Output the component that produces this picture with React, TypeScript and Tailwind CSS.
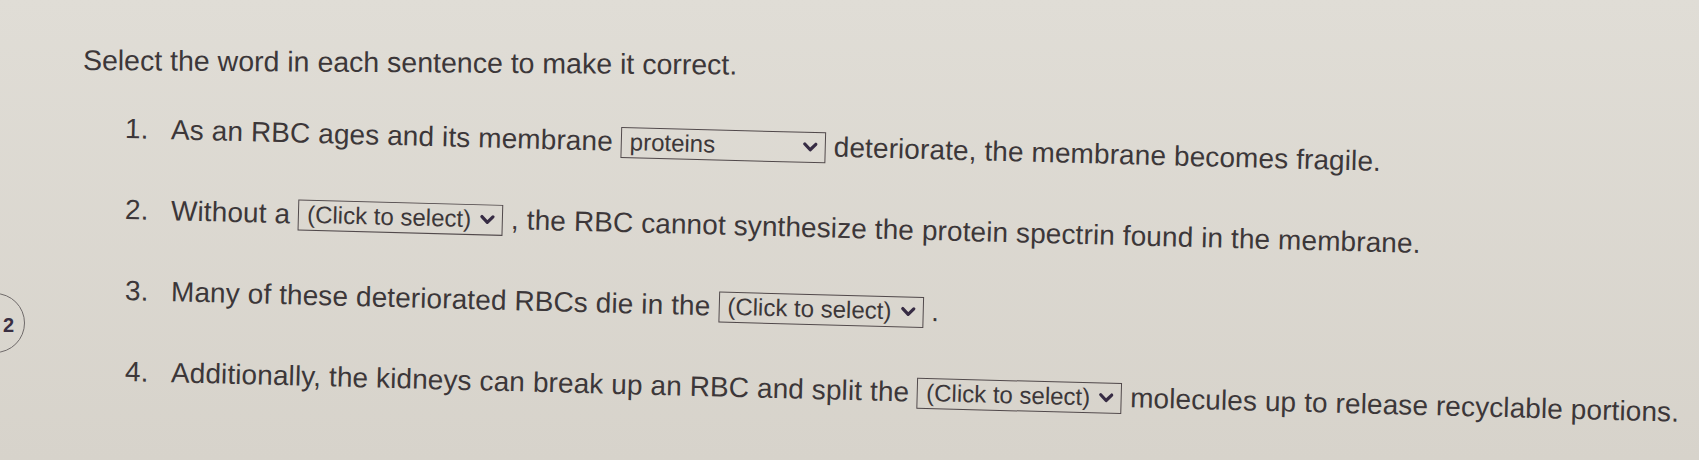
import type { ReactNode } from "react"

/* Fill-in-the-blank question: each sentence has one inline select box. */

function Chevron() {
  return (
    <svg width="15" height="11" viewBox="0 0 15 11" aria-hidden>
      <path
        d="M2 2.2 L7.5 7.8 L13 2.2"
        fill="none"
        stroke="#372c44"
        strokeWidth="3.2"
        strokeLinecap="round"
        strokeLinejoin="round"
      />
    </svg>
  )
}

function Blank({ value }: { value: string }) {
  return (
    <span className="mx-2 inline-flex h-[31px] w-[205px] shrink-0 items-center justify-between border-[1.5px] border-[#51494b] pl-[8px] pr-[7px] text-[24px] leading-none tracking-normal text-[#3c3739]">
      <span>{value}</span>
      <Chevron />
    </span>
  )
}

interface Row {
  n: number
  parts: ReactNode[]
}

const ROWS: Row[] = [
  {
    n: 1,
    parts: [
      "As an RBC ages and its membrane",
      <Blank key="b" value="proteins" />,
      "deteriorate, the membrane becomes fragile.",
    ],
  },
  {
    n: 2,
    parts: [
      "Without a",
      <Blank key="b" value="(Click to select)" />,
      ", the RBC cannot synthesize the protein spectrin found in the membrane.",
    ],
  },
  {
    n: 3,
    parts: [
      "Many of these deteriorated RBCs die in the",
      <Blank key="b" value="(Click to select)" />,
      ".",
    ],
  },
  {
    n: 4,
    parts: [
      "Additionally, the kidneys can break up an RBC and split the",
      <Blank key="b" value="(Click to select)" />,
      "molecules up to release recyclable portions.",
    ],
  },
]

export default function App() {
  return (
    <div
      className="relative h-[460px] w-[1699px] overflow-hidden bg-gradient-to-b from-[#e0ddd6] to-[#d7d3cb] text-[#3c3739]"
      style={{ fontFamily: '"Liberation Sans", Arial, sans-serif' }}
    >
      {/* question bubble, cut off at the left edge */}
      <div className="absolute left-[-35px] top-[293px] h-[60px] w-[60px] rounded-full border-[1.5px] border-[#6f6a6a]" />
      <span className="absolute left-[3px] top-[315px] text-[20px] font-bold leading-none text-[#3a2f42]">2</span>

      <div className="pl-[83px] pt-[44px]">
        <h1 className="origin-left rotate-[0.4deg] whitespace-nowrap text-[28.5px] leading-[32px]">
          Select the word in each sentence to make it correct.
        </h1>

        <ol className="ml-[42px] mt-[37px] space-y-[49px]">
          {ROWS.map((r) => (
            <li
              key={r.n}
              className="flex origin-left rotate-[1.5deg] items-center whitespace-nowrap text-[28px] leading-[32px] tracking-[0.1px]"
            >
              <span className="w-[46px] shrink-0">{r.n}.</span>
              {r.parts.map((p, i) =>
                typeof p === "string" ? <span key={i}>{p}</span> : p
              )}
            </li>
          ))}
        </ol>
      </div>
    </div>
  )
}
